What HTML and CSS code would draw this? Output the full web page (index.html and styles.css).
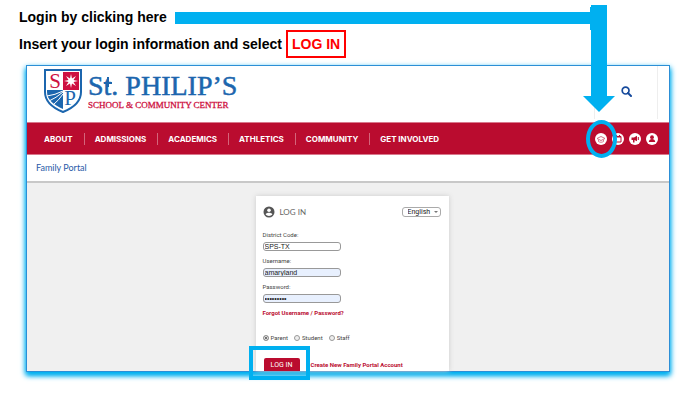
FILE: index.html
```html
<!DOCTYPE html>
<html lang="en">
<head>
    <meta charset="UTF-8">
    <meta name="viewport" content="width=device-width, initial-scale=1.0">
    <title>Family Portal Login</title>
    <link rel="stylesheet" href="styles.css">
</head>
<body>
    <div class="guide">
        <div class="step">
            <span>Login by clicking here</span>
            <div class="arrow-line"></div>
        </div>
        <div class="step">
            <span>Insert your login information and select</span>
            <span class="boxed">LOG IN</span>
        </div>

        <svg class="arrow" width="34" height="107" viewBox="0 0 34 107">
            <path d="M8 2h1V0h16v91h8L17 107 1 91h8V25H8z" fill="#00b0f0"/>
        </svg>

        <div class="portal">
            <header class="header">
                <div class="logo">
                    <svg class="shield" width="38" height="44" viewBox="0 0 38 44">
                        <path d="M1 1h36v22c0 10-8 16-18 20C9 39 1 33 1 23z" fill="#fff" stroke="#1c66ae" stroke-width="2"/>
                        <path d="M19 3h16v18H19z" fill="#ce1141"/>
                        <path d="M3 21h16v19C10 36 3 31 3 23z" fill="#1c66ae"/>
                        <path d="M3 27q8-1 16-5M5 32q7-3 14-9M9 36q6-5 10-11" fill="none" stroke="#fff" stroke-width="1"/>
                        <path d="M27 5l1 4.500 4-2.500-2.500 4L34 12l-4.500 1 2.500 4-4-2.500L27 19l-1-4.500-4 2.500 2.500-4L20 12l4.500-1L22 7l4 2.500z" fill="#fff"/>
                        <text x="11" y="19" class="mono red">S</text>
                        <text x="26" y="36" class="mono blue">P</text>
                    </svg>
                    <div>
                        <div class="logo-name">S<span class="cross">t</span>. PHILIP’S</div>
                        <div class="logo-sub">SCHOOL &amp; COMMUNITY CENTER</div>
                    </div>
                </div>
                <div class="search">
                    <button type="button" class="search-btn" aria-label="Search">
                        <svg width="11" height="11" viewBox="0 0 11 11">
                            <circle cx="4.6" cy="4.6" r="3.4" fill="none" stroke="#164a9c" stroke-width="1.7"/>
                            <path d="M7 7l3 3" stroke="#164a9c" stroke-width="2" stroke-linecap="round"/>
                        </svg>
                    </button>
                </div>
            </header>

            <nav class="nav">
                <div class="nav-links">
                    <a href="#">ABOUT</a>
                    <a href="#">ADMISSIONS</a>
                    <a href="#">ACADEMICS</a>
                    <a href="#">ATHLETICS</a>
                    <a href="#">COMMUNITY</a>
                    <a href="#">GET INVOLVED</a>
                </div>
                <div class="nav-icons">
                    <a href="#" class="circled" aria-label="Family portal">
                        <svg width="12" height="12" viewBox="0 0 12 12">
                            <path d="M2 5.500L6 3.500l4 2-4 2z" fill="none" stroke="#d0607a" stroke-width=".9"/>
                            <path d="M3.500 7v1.500c1.500 1 3.500 1 5 0V7" fill="none" stroke="#d0607a" stroke-width=".8"/>
                        </svg>
                    </a>
                    <a href="#" aria-label="Calendar">
                        <svg width="12" height="12" viewBox="0 0 12 12">
                            <path d="M3 3.500h6V9H3z" fill="none" stroke="#ba0c2f"/>
                            <path d="M3 4h6M4.500 2v2M7.500 2v2" stroke="#ba0c2f" stroke-width="1.2"/>
                        </svg>
                    </a>
                    <a href="#" aria-label="News">
                        <svg width="12" height="12" viewBox="0 0 12 12">
                            <path d="M2.500 4.500h2.500l3-1.800v5.600L5.500 7v2.500H4V7H2.500z" fill="#ba0c2f"/>
                            <path d="M9.300 4v3" stroke="#ba0c2f"/>
                        </svg>
                    </a>
                    <a href="#" aria-label="Account">
                        <svg width="12" height="12" viewBox="0 0 12 12">
                            <circle cx="6" cy="4.200" r="1.900" fill="#ba0c2f"/>
                            <path d="M2.800 9c0-4 6.400-4 6.400 0z" fill="#ba0c2f"/>
                        </svg>
                    </a>
                </div>
            </nav>

            <div class="page-title">Family Portal</div>

            <main class="main">
                <form class="card">
                    <div class="card-head">
                        <svg width="12" height="12" viewBox="0 0 12 12">
                            <circle cx="6" cy="6" r="5.500" fill="#555"/>
                            <circle cx="6" cy="4.200" r="1.800" fill="#fff"/>
                            <path d="M2.600 8.300c1-2 5.800-2 6.800 0-1.500 2.200-5.300 2.200-6.800 0z" fill="#fff"/>
                        </svg>
                        <span class="card-title">LOG IN</span>
                        <div class="language">
                            <select aria-label="Language">
                                <option>English</option>
                            </select>
                        </div>
                    </div>

                    <div class="form-group">
                        <label for="district">District Code:</label>
                        <input type="text" id="district" value="SPS-TX">
                    </div>
                    <div class="form-group">
                        <label for="username">Username:</label>
                        <input type="text" id="username" class="filled" value="amaryland">
                    </div>
                    <div class="form-group">
                        <label for="password">Password:</label>
                        <input type="password" id="password" class="filled" value="password1">
                    </div>
                    <a href="#" class="link">Forgot Username / Password?</a>

                    <div class="roles">
                        <label><input type="radio" name="role" checked> Parent</label>
                        <label><input type="radio" name="role"> Student</label>
                        <label><input type="radio" name="role"> Staff</label>
                    </div>

                    <div class="actions">
                        <div class="highlight">
                            <button type="submit" class="btn">LOG IN</button>
                        </div>
                        <a href="#" class="link">Create New Family Portal Account</a>
                    </div>
                </form>
            </main>
        </div>
    </div>
</body>
</html>
```

FILE: styles.css
```css
*,
*::before,
*::after {
    box-sizing: border-box;
}

body {
    margin: 0;
    background-color: #fff;
    font-family: "Liberation Sans", Arial, sans-serif;
}

a {
    text-decoration: none;
}

svg {
    display: block;
}

.guide {
    position: relative;
    padding: 4px 17px 28px 26px;
}

/* instructions above the portal */
.step {
    display: flex;
    align-items: center;
    height: 26px;
    margin-left: -7px;
    font-size: 14px;
    font-weight: bold;
    color: #000;
}

.step + .step {
    height: 27px;
}

.arrow-line {
    flex: 1;
    height: 12px;
    margin-top: 2px;
    margin-left: 8px;
    margin-right: 78px;
    background-color: #00b0f0;
}

.boxed {
    margin-left: 4px;
    padding: 4px;
    border: 2px solid #f00;
    line-height: 16px;
    color: #f00;
}

.arrow {
    position: absolute;
    top: 5px;
    right: 71px;
    z-index: 2;
}

.portal {
    margin-top: 8px;
    border: 1px solid #2c8fd6;
    box-shadow: 0 3px 5px #00b0f0, 0 3px 6px #00b0f0;
    background-color: #fff;
}

/* logo and search */
.header {
    display: flex;
    justify-content: space-between;
    height: 56px;
    padding: 0 11px 0 17px;
}

.logo {
    display: flex;
    gap: 6px;
    padding-top: 3px;
}

.logo-name {
    margin-top: 2px;
    font-family: "Liberation Serif", serif;
    font-size: 28px;
    line-height: 29px;
    color: #1c66ae;
    -webkit-text-stroke: 0.5px #1c66ae;
}

.cross {
    position: relative;
}

/* the t of the logo is drawn as a cross */
.cross::before,
.cross::after {
    content: "";
    position: absolute;
    background-color: #1c66ae;
}

.cross::before {
    top: 7px;
    left: 3px;
    width: 2px;
    height: 10px;
}

.cross::after {
    top: 12px;
    left: 0;
    width: 8px;
    height: 2px;
}

.logo-sub {
    font-family: "Liberation Serif", serif;
    font-size: 9px;
    line-height: 10px;
    color: #ce1141;
    -webkit-text-stroke: 0.3px #ce1141;
}

.mono {
    font-family: "Liberation Serif", serif;
    font-size: 21px;
    text-anchor: middle;
}

.red {
    fill: #ce1141;
}

.blue {
    fill: #1c66ae;
    stroke: #fff;
    stroke-width: 2px;
    paint-order: stroke;
}

.search {
    width: 64px;
    height: 53px;
    border-left: 1px solid #eee;
    border-right: 1px solid #eee;
    padding: 20px 0 0 26px;
}

.search-btn {
    display: block;
    padding: 0;
    border: none;
    background: none;
}

/* red menu bar */
.nav {
    display: flex;
    justify-content: space-between;
    align-items: center;
    height: 33px;
    padding: 0 11px 0 7px;
    border-top: 1px solid #d9788c;
    border-bottom: 1px solid #d9788c;
    background-color: #ba0c2f;
}

.nav-links {
    display: flex;
}

.nav-links a {
    padding: 0 11px 0 10px;
    border-left: 1px solid #d4657b;
    font-family: Inter, sans-serif;
    font-size: 8px;
    font-weight: bold;
    line-height: 12px;
    color: #fff;
}

.nav-links a:first-child {
    border-left: none;
}

.nav-icons {
    display: flex;
    gap: 5px;
}

.nav-icons a {
    position: relative;
    border-radius: 50%;
    background-color: #fff;
}

.circled::after {
    content: "";
    position: absolute;
    top: -13px;
    left: -9px;
    width: 31px;
    height: 38px;
    border: 4px solid #00b0f0;
    border-radius: 50%;
    z-index: 1;
}

.page-title {
    height: 28px;
    padding-left: 9px;
    border-bottom: 2px solid #c8c8c8;
    font-family: Lato, sans-serif;
    font-size: 9px;
    line-height: 26px;
    color: #2a5ba8;
}

.main {
    display: flex;
    justify-content: center;
    padding-top: 13px;
    background-color: #f0f0f0;
}

/* login card */
.card {
    width: 30%;
    min-width: 193px;
    margin-left: 8px;
    padding: 10px 8px 0 7px;
    background-color: #fff;
    box-shadow: 0 0 5px #ccc;
    font-family: Roboto, sans-serif;
    font-size: 6px;
    line-height: 8px;
    color: #444;
}

.card-head {
    display: flex;
    align-items: center;
    gap: 5px;
    height: 12px;
    margin-bottom: 13px;
}

.card-title {
    font-family: Lato, sans-serif;
    font-size: 8px;
    color: #666;
}

.language {
    position: relative;
    margin-left: auto;
}

.language select {
    display: block;
    width: 39px;
    height: 10px;
    padding: 0 0 0 5px;
    border: 1px solid #aaa;
    border-radius: 3px;
    appearance: none;
    background-color: #fff;
    font-family: Roboto, sans-serif;
    font-size: 7px;
    line-height: 8px;
    color: #222;
}

.language::after {
    content: "";
    position: absolute;
    top: 4px;
    right: 3px;
    border: 2px solid transparent;
    border-top-color: #777;
}

.form-group {
    margin-bottom: 6px;
}

.form-group label {
    display: block;
    margin-bottom: 3px;
}

.form-group input {
    display: block;
    width: 78px;
    height: 9px;
    padding: 0 1px;
    border: 1px solid #999;
    border-radius: 3px;
    background-color: #fff;
    font-family: "Liberation Sans", Arial, sans-serif;
    font-size: 7px;
    line-height: 7px;
    color: #222;
}

.form-group input.filled {
    background-color: #e8f0fe;
}

.link {
    font-weight: bold;
    color: #ba0c2f;
}

.roles {
    display: flex;
    gap: 6px;
    margin-top: 17px;
    margin-bottom: 16px;
}

.roles label {
    display: flex;
    align-items: center;
    gap: 2px;
}

.roles input {
    width: 6px;
    height: 6px;
    margin: 0;
    border: 1px solid #999;
    border-radius: 50%;
    appearance: none;
    background-color: #eee;
}

.roles input:checked {
    background-color: #444;
    box-shadow: inset 0 0 0 1px #fff;
}

.actions {
    display: flex;
    align-items: center;
    gap: 11px;
    padding-left: 1px;
}

.highlight {
    position: relative;
}

.highlight::after {
    content: "";
    position: absolute;
    top: -12px;
    left: -15px;
    width: 61px;
    height: 34px;
    border: 4px solid #00b0f0;
    pointer-events: none;
}

.btn {
    display: block;
    width: 36px;
    height: 13px;
    padding: 0;
    border: none;
    border-radius: 2px 2px 0 0;
    background-color: #ba0c2f;
    font-family: Roboto, sans-serif;
    font-size: 7px;
    color: #fff;
}
```
